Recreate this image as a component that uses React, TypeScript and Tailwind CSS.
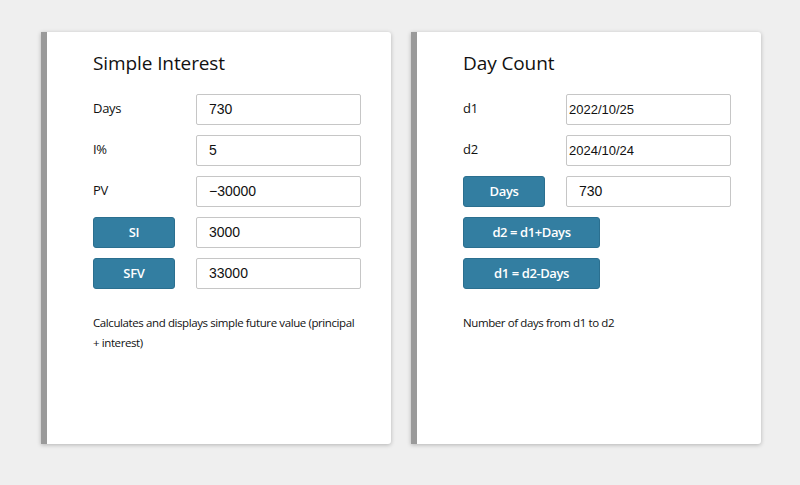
import React from "react";

const font = { fontFamily: '"Open Sans", "Noto Sans", sans-serif' };

function Row({ label, value, button, date }: { label: string; value: string; button?: boolean; date?: boolean }) {
  return (
    <div className="flex items-center h-[31px]">
      <div className="w-[103px] shrink-0">
        {button ? (
          <div className="w-[82px] h-[31px] rounded-[3px] bg-[#337ea1] border border-[#2b6f8f] text-white text-[13px] font-semibold tracking-[-0.3px] flex items-center justify-center pt-[1px]">
            {label}
          </div>
        ) : (
          <span className="block pb-[1px] text-[13px] tracking-[-0.3px] text-[#111]">{label}</span>
        )}
      </div>
      <div
        className={`w-[165px] h-[31px] border border-[#c6c6c6] rounded-[2px] flex items-center text-[#111] ${date ? "pl-[2px] text-[13px]" : "pl-[12px] text-[14px]"}`}
        style={{ fontFamily: '"Liberation Sans", Arial, sans-serif' }}
      >
        {value}
      </div>
    </div>
  );
}

function WideButton({ label }: { label: string }) {
  return (
    <div className="flex items-center h-[31px]">
      <div className="w-[137px] h-[31px] rounded-[3px] bg-[#337ea1] border border-[#2b6f8f] text-white text-[13px] font-semibold tracking-[-0.4px] flex items-center justify-center pt-[1px]">
        {label}
      </div>
    </div>
  );
}

function Card({ title, children, desc }: { title: string; children: React.ReactNode; desc: React.ReactNode }) {
  return (
    <div className="w-[350px] h-[412px] bg-white border-l-[6px] border-[#9a9a9a] rounded-r-[3px] shadow-[0_1px_4px_rgba(0,0,0,0.25)] pl-[46px] pr-[30px] pt-[17px]">
      <h2 className="text-[19px] leading-[28px] tracking-[-0.1px] text-[#111]">{title}</h2>
      <div className="mt-[17px] flex flex-col gap-[10px]">{children}</div>
      <p className="mt-[24px] text-[11.5px] leading-[20px] tracking-[-0.4px] text-[#111] w-[264px]">{desc}</p>
    </div>
  );
}

export default function App() {
  return (
    <div className="w-[800px] h-[485px] bg-[#efefef] flex gap-[20px] pl-[41px] pt-[32px]" style={font}>
      <Card title="Simple Interest" desc="Calculates and displays simple future value (principal + interest)">
        <Row label="Days" value="730" />
        <Row label="I%" value="5" />
        <Row label="PV" value="−30000" />
        <Row label="SI" value="3000" button />
        <Row label="SFV" value="33000" button />
      </Card>
      <Card title="Day Count" desc="Number of days from d1 to d2">
        <Row label="d1" value="2022/10/25" date />
        <Row label="d2" value="2024/10/24" date />
        <Row label="Days" value="730" button />
        <WideButton label="d2 = d1+Days" />
        <WideButton label="d1 = d2-Days" />
      </Card>
    </div>
  );
}
